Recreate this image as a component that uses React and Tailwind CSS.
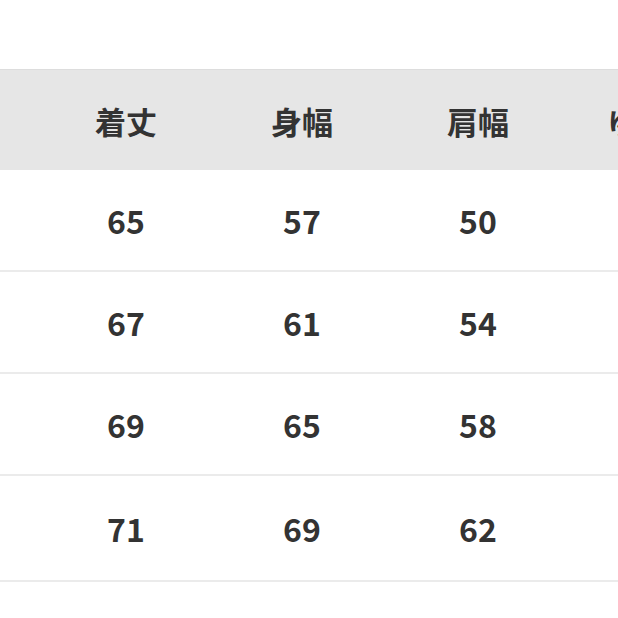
import React from "react";

const headers = ["着丈", "身幅", "肩幅", "ゆき丈"];
const rows = [
  ["65", "57", "50", "80"],
  ["67", "61", "54", "82"],
  ["69", "65", "58", "84"],
  ["71", "69", "62", "86"],
];

export default function App() {
  return (
    <div
      className="w-[618px] h-[618px] overflow-hidden bg-white text-[#333333]"
      style={{ fontFamily: '"Noto Sans CJK JP", "Noto Sans", sans-serif' }}
    >
      <div className="h-[69px]" />
      <div className="w-[800px]">
        <div className="flex h-[101px] items-center bg-[#e6e6e6] border-t border-[#dddddd] pl-[38px]">
          {headers.map((h) => (
            <div key={h} className="w-[176px] shrink-0 text-center text-[31px] font-bold leading-none">
              {h}
            </div>
          ))}
        </div>
        {rows.map((r, i) => (
          <div
            key={i}
            className={`flex items-center border-b-2 border-[#ebebeb] pl-[38px] ${i === 3 ? "h-[106px]" : "h-[102px]"}`}
          >
            {r.map((c, j) => (
              <div key={j} className="w-[176px] shrink-0 text-center text-[32px] font-bold leading-none">
                {c}
              </div>
            ))}
          </div>
        ))}
      </div>
    </div>
  );
}
